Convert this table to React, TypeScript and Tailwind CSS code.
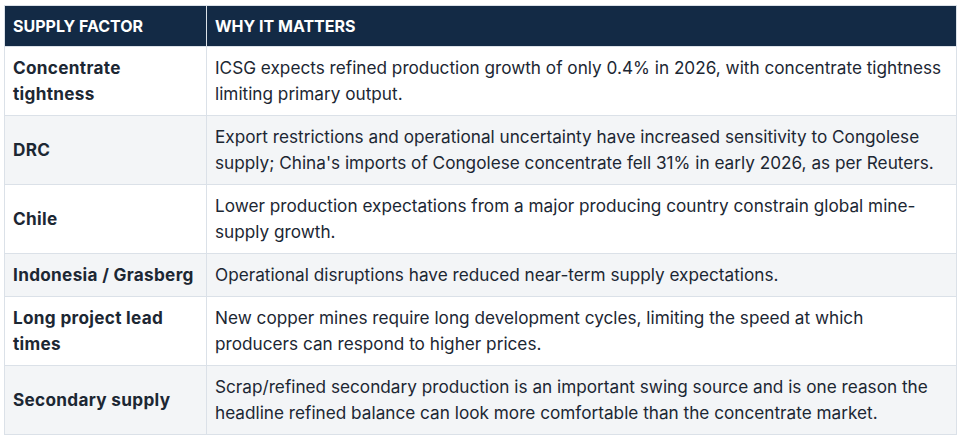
const rows = [
  {
    factor: "Concentrate tightness",
    why: "ICSG expects refined production growth of only 0.4% in 2026, with concentrate tightness limiting primary output.",
  },
  {
    factor: "DRC",
    why: "Export restrictions and operational uncertainty have increased sensitivity to Congolese supply; China's imports of Congolese concentrate fell 31% in early 2026, as per Reuters.",
  },
  {
    factor: "Chile",
    why: "Lower production expectations from a major producing country constrain global mine-supply growth.",
  },
  {
    factor: "Indonesia / Grasberg",
    why: "Operational disruptions have reduced near-term supply expectations.",
  },
  {
    factor: "Long project lead times",
    why: "New copper mines require long development cycles, limiting the speed at which producers can respond to higher prices.",
  },
  {
    factor: "Secondary supply",
    why: "Scrap/refined secondary production is an important swing source and is one reason the headline refined balance can look more comfortable than the concentrate market.",
  },
];

export default function App() {
  return (
    <div className="bg-white w-[965px] h-[443px] pl-[4px] pt-[5px] font-['Inter',sans-serif] text-[#1c2733]">
      <table className="w-[953px] table-fixed border-collapse">
        <thead>
          <tr className="bg-[#132a45] text-white text-[16px] text-left">
            <th className="w-[202px] h-[41px] px-2 border border-[#dbe1e8] font-bold">SUPPLY FACTOR</th>
            <th className="h-[41px] px-2 border border-[#dbe1e8] font-bold">WHY IT MATTERS</th>
          </tr>
        </thead>
        <tbody>
          {rows.map((row, i) => (
            <tr key={row.factor} className={i % 2 === 1 ? "bg-[#f3f5f7]" : "bg-white"}>
              <td className="px-2 py-2 border border-[#dbe1e8] text-[17.2px] leading-[26px] font-bold tracking-[0.3px] align-middle">
                {row.factor}
              </td>
              <td className="pl-2 pr-3 py-2 border border-[#dbe1e8] text-[17.2px] leading-[26px] align-middle">
                {row.why}
              </td>
            </tr>
          ))}
        </tbody>
      </table>
    </div>
  );
}
